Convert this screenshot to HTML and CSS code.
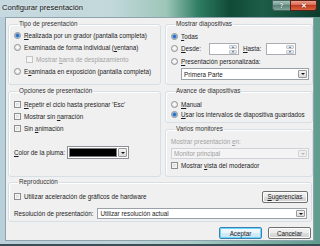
FILE: index.html
```html
<!DOCTYPE html>
<html lang="es">
<head>
<meta charset="utf-8">
<title>Configurar presentación</title>
<link rel="stylesheet" href="styles.css">
</head>
<body>
<div class="window">
  <div class="titlebar">
    <span class="title">Configurar presentación</span>
    <div class="caption">
      <span class="cap-help">?</span>
      <span class="cap-close">✕</span>
    </div>
  </div>
  <div class="client">
    <div class="grid">
      <fieldset class="group g-tipo">
        <legend>Tipo de presentación</legend>
        <div class="row r12"><span class="radio on"></span><span><u>R</u>ealizada por un grador (pantalla completa)</span></div>
        <div class="row r12"><span class="radio"></span><span>Examinada de forma individual (<u>v</u>entana)</span></div>
        <div class="row r12 indent dis"><span class="check dis"></span><span>Mostrar <u>b</u>arra de desplazamiento</span></div>
        <div class="row r12"><span class="radio"></span><span>E<u>x</u>aminada en exposición (pantalla completa)</span></div>
      </fieldset>

      <fieldset class="group g-mostrar">
        <legend>Mostrar diapositivas</legend>
        <div class="row r12"><span class="radio on"></span><span><u>T</u>odas</span></div>
        <div class="row r13">
          <span class="radio"></span><span class="lbl-desde"><u>D</u>esde:</span>
          <span class="spin"><span class="spin-btns"><i class="up"></i><i class="down"></i></span></span>
          <span class="lbl-hasta"><u>H</u>asta:</span>
          <span class="spin"><span class="spin-btns"><i class="up"></i><i class="down"></i></span></span>
        </div>
        <div class="row r12"><span class="radio"></span><span><u>P</u>resentación personalizada:</span></div>
        <div class="combo combo-custom"><span class="combo-text">Primera Parte</span><span class="combo-btn"><i class="tri"></i></span></div>
      </fieldset>

      <fieldset class="group g-opciones">
        <legend>Opciones de presentación</legend>
        <div class="row r12"><span class="check"></span><span><u>R</u>epetir el ciclo hasta presionar 'Esc'</span></div>
        <div class="row r12"><span class="check"></span><span>Mostrar sin <u>n</u>arración</span></div>
        <div class="row r12"><span class="check"></span><span>Sin <u>a</u>nimación</span></div>
        <div class="row pen-row"><span><u>C</u>olor de la pluma:</span>
          <span class="color-pick"><span class="swatch"></span><span class="combo-btn"><i class="tri"></i></span></span>
        </div>
      </fieldset>

      <div class="stack">
        <fieldset class="group g-avance">
          <legend>Avance de diapositivas</legend>
          <div class="row r10"><span class="radio"></span><span><u>M</u>anual</span></div>
          <div class="row r10"><span class="radio on"></span><span><u>U</u>sar los intervalos de diapositiva guardados</span></div>
        </fieldset>
        <fieldset class="group g-varios">
          <legend>Varios monitores</legend>
          <div class="row r12 dis"><span>Mostrar presentación <u>e</u>n:</span></div>
          <div class="combo combo-dis"><span class="combo-text">Monitor principal</span><span class="combo-btn"><i class="tri"></i></span></div>
          <div class="row r12"><span class="check"></span><span>Mostrar <u>v</u>ista del moderador</span></div>
        </fieldset>
      </div>
    </div>

    <fieldset class="group g-repro">
      <legend>Reproducción</legend>
      <div class="row repro-row">
        <div class="row"><span class="check"></span><span>Utilizar aceleración de gráficos de hardware</span></div>
        <span class="btn btn-tips"><u>S</u>ugerencias</span>
      </div>
      <div class="row res-row">
        <span>Resolución de presentación:</span>
        <div class="combo combo-res"><span class="combo-text">Utilizar resolución actual</span><span class="combo-btn"><i class="tri"></i></span></div>
      </div>
    </fieldset>

    <div class="buttons">
      <span class="btn btn-default">Aceptar</span>
      <span class="btn">Cancelar</span>
    </div>
  </div>
</div>
</body>
</html>
```
FILE: styles.css
```css
* { box-sizing: border-box; }
html, body { margin: 0; padding: 0; }
body {
  width: 320px;
  height: 246px;
  overflow: hidden;
  background: #0d2d25;
  font-family: "Liberation Sans", Arial, sans-serif;
  font-size: 6.3px;
  color: #1c1c1c;
}
u { text-decoration: underline; text-underline-offset: 1px; }

.window {
  width: 320px;
  height: 246px;
  display: flex;
  flex-direction: column;
  background: linear-gradient(to right, #b9cfd9 0%, #bcd3d7 40%, #a9cbc6 60%, #7fb3a6 80%, #5f9c8d 100%);
  border-bottom: 2px solid #3a4e55;
  padding: 0 6px 3px 5px;
}

.titlebar {
  height: 17px;
  margin: 0 -6px 0 -5px;
  padding-left: 2px;
  display: flex;
  align-items: flex-start;
  background:
    linear-gradient(to right, #c6d9e0 0%, #c2d8da 35%, #9cc6b8 52%, #2f7d63 62%, #0f4a36 72%, #1d5e48 82%, #0c3b2c 100%);
}
.title {
  font-size: 7.6px;
  line-height: 15px;
  color: #101010;
  text-shadow: 0 0 3px rgba(255,255,255,0.9);
  flex: 1;
}
.caption {
  display: flex;
  margin-right: 3px;
  height: 11px;
}
.cap-help {
  width: 18px;
  height: 11px;
  border: 1px solid #46635c;
  border-right: none;
  border-radius: 0 0 0 3px;
  background: linear-gradient(#a4c4bd, #6f9990 50%, #5b8479 50%, #7fa69b);
  color: #fff;
  font-size: 7px;
  font-weight: bold;
  line-height: 9px;
  text-align: center;
  text-shadow: 0 0 1px #000;
}
.cap-close {
  width: 27px;
  height: 11px;
  border: 1px solid #5a1f16;
  border-radius: 0 0 3px 0;
  background: linear-gradient(#eba08f, #d5634c 50%, #c23b22 50%, #d5653f);
  color: #fff;
  font-size: 7px;
  font-weight: bold;
  line-height: 9px;
  text-align: center;
  text-shadow: 0 0 2px #5a1000;
}

.client {
  flex: 1;
  background: #f0f0f0;
  border: 1px solid #8ea3ad;
  padding: 2px 1px 0 2px;
  display: flex;
  flex-direction: column;
}

.grid {
  display: grid;
  grid-template-columns: 153px 148px;
  grid-template-rows: 65px 90px;
  column-gap: 4px;
  row-gap: 2px;
}

.group {
  margin: 0;
  padding: 0 3px 0 5px;
  border: 1px solid #d5dfe5;
  border-radius: 3px;
  box-shadow: inset 1px 1px 0 #fff;
  min-width: 0;
}
.group legend {
  padding: 0 1px;
  margin-left: 4px;
  line-height: 8px;
  color: #303030;
}

.row {
  display: flex;
  align-items: center;
  white-space: nowrap;
}
.r12 { height: 12px; }
.r13 { height: 13px; }
.r10 { height: 10px; }
.indent { padding-left: 12px; }
.dis { color: #a3a3a3; }

.radio {
  width: 7px;
  height: 7px;
  flex: none;
  margin-right: 3px;
  border-radius: 50%;
  border: 1px solid #8c9095;
  background: radial-gradient(circle at 50% 40%, #ffffff 0, #f2f2f2 40%, #d4d4d4 100%);
}
.radio.on {
  background: radial-gradient(circle, #1f5fb4 0, #3b7fd0 1.4px, #9cc1e8 2.3px, #f0f0f0 2.8px);
}
.check {
  width: 7px;
  height: 7px;
  flex: none;
  margin-right: 3px;
  border: 1px solid #8f8f8f;
  background: linear-gradient(135deg, #d2d2d2, #f8f8f8);
  box-shadow: inset 0 0 0 1px #f4f4f4;
}
.check.dis {
  border-color: #c5c5c5;
  background: #f6f6f6;
}

.g-tipo .row:first-of-type { margin-top: 1px; }
.g-mostrar legend + .row { margin-top: 2px; }

.lbl-desde { width: 28px; }
.lbl-hasta { margin: 0 5px 0 4px; }
.spin {
  width: 30px;
  height: 12px;
  border: 1px solid #abadb3;
  background: #fff;
  display: flex;
  justify-content: flex-end;
  padding: 1px;
}
.spin-btns {
  width: 8px;
  display: flex;
  flex-direction: column;
  gap: 1px;
}
.spin-btns i {
  flex: 1;
  display: flex;
  align-items: center;
  justify-content: center;
  background: linear-gradient(#f4f4f4, #dcdcdc);
  border: 1px solid #c5c8cc;
  border-radius: 1px;
}
.spin-btns i::after {
  content: "";
  border-left: 1.5px solid transparent;
  border-right: 1.5px solid transparent;
}
.spin-btns .up::after { border-bottom: 2px solid #3d6fa8; }
.spin-btns .down::after { border-top: 2px solid #3d6fa8; }

.combo {
  height: 12px;
  border: 1px solid #9aa1a9;
  background: #fff;
  display: flex;
  align-items: center;
  padding: 1px 1px 1px 2px;
}
.combo-text { flex: 1; white-space: nowrap; overflow: hidden; }
.combo-btn {
  width: 9px;
  height: 100%;
  flex: none;
  display: flex;
  align-items: center;
  justify-content: center;
  background: linear-gradient(#f3f3f3, #dadada);
  border: 1px solid #9a9a9a;
  border-radius: 1px;
}
.tri {
  border-left: 2px solid transparent;
  border-right: 2px solid transparent;
  border-top: 2px solid #111;
}
.combo-custom { margin: 1px 0 0 10px; }
.combo-dis {
  height: 11px;
  margin: 1px 0 0 0;
  border-color: #cfd3d7;
  background: #f4f4f4;
  color: #9d9d9d;
}
.combo-dis .combo-btn { border-color: #d2d2d2; background: #efefef; }
.combo-dis .tri { border-top-color: #b5b5b5; }

.g-opciones legend + .row { margin-top: 3px; }
.pen-row { margin-top: 12px; height: 13px; }
.color-pick {
  width: 62px;
  height: 13px;
  margin-left: 2px;
  border: 1px solid #8d9197;
  background: #fff;
  display: flex;
  padding: 1px;
  gap: 1px;
}
.swatch {
  flex: 1;
  background: #000;
  border: 1px solid #fff;
  outline: 1px solid #777;
  outline-offset: -1px;
}

.stack {
  display: flex;
  flex-direction: column;
  gap: 2px;
}
.g-avance { height: 36px; }
.g-avance legend + .row { margin-top: 4px; }
.g-varios { height: 52px; }
.g-varios legend + .row { margin-top: 2px; }

.g-repro {
  height: 44px;
  margin-top: 1px;
}
.repro-row {
  justify-content: space-between;
  height: 13px;
  margin-top: 4px;
}
.res-row { margin-top: 5px; height: 11px; }
.combo-res { flex: 1; height: 11px; margin-left: 4px; margin-right: 1px; }

.btn {
  height: 12px;
  display: inline-flex;
  align-items: center;
  justify-content: center;
  border: 1px solid #707070;
  border-radius: 2px;
  background: linear-gradient(#f2f2f2 0, #ebebeb 50%, #dddddd 50%, #cfcfcf 100%);
  box-shadow: inset 0 0 0 1px #fcfcfc;
  white-space: nowrap;
  color: #1c1c1c;
}
.btn-tips { width: 46px; }
.buttons {
  display: flex;
  justify-content: flex-end;
  gap: 6px;
  margin-top: 5px;
  padding-right: 1px;
}
.buttons .btn { width: 43px; }
.btn-default {
  border-color: #3c7fb1;
  box-shadow: inset 0 0 0 1px #6ad8f8;
  background: linear-gradient(#f2f9fd 0, #e8f4fa 50%, #d6ebf7 50%, #c9e3f3 100%);
}
```
